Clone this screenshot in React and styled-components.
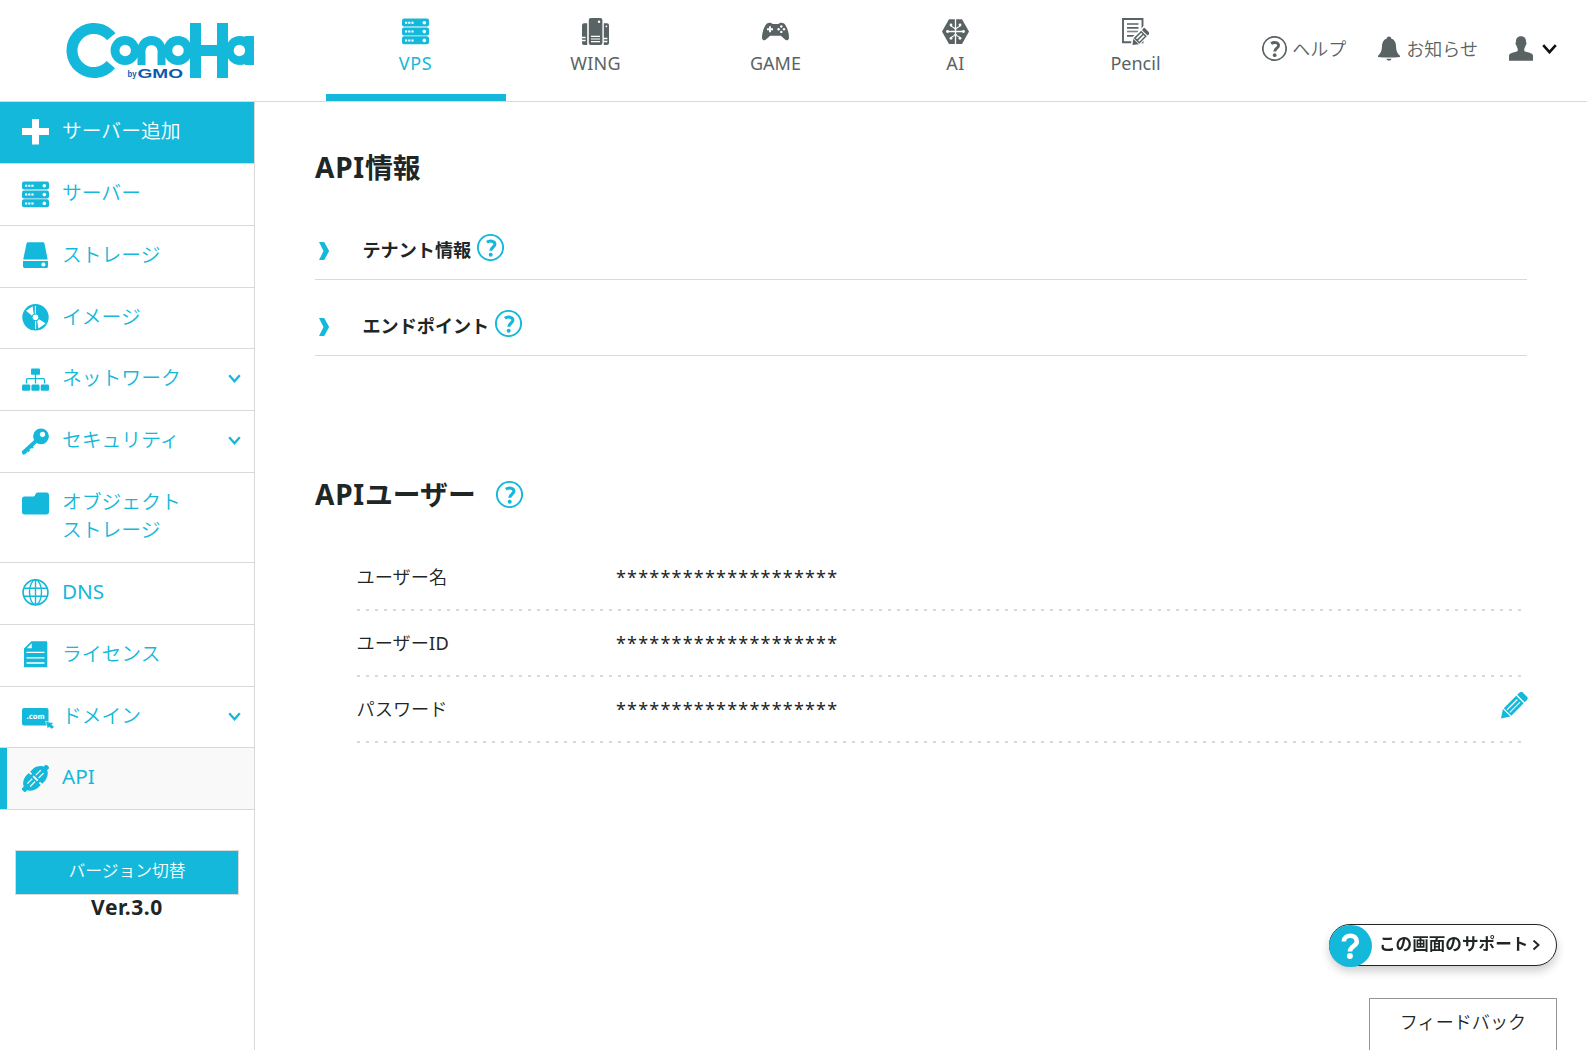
import React from 'react';
import styled, { createGlobalStyle, css } from 'styled-components';

const cyan = '#14b8da';
const ink = '#202526';
const gray = '#5a6363';
const line = '#d9d9d9';

const GlobalStyle = createGlobalStyle`
  *, *::before, *::after { box-sizing: border-box; }
  html, body { margin: 0; padding: 0; height: 100%; overflow: hidden; }
  body {
    background: #fff;
    color: ${ink};
    font-family: "Noto Sans", "Noto Sans CJK JP", sans-serif;
    font-size: 18px;
    font-weight: 350;
  }
  h1, h2, p { margin: 0; }
  button { font-weight: inherit; }
  svg { display: block; flex: none; }
`;

const Page = styled.div`
  display: flex;
  flex-direction: column;
  height: 100vh;
`;

const Header = styled.header`
  display: flex;
  flex: none;
  height: 102px;
  border-bottom: 1px solid ${line};
`;

const LogoLink = styled.a`
  width: 254px;
  padding: 22px 0 0 66px;
`;

const Nav = styled.nav`
  display: flex;
  margin-left: 72px;
`;

const NavItem = styled.a`
  display: flex;
  flex-direction: column;
  align-items: center;
  width: 180px;
  height: 101px;
  padding: 18px 1px 0 0;
  color: ${(p) => (p.$active ? cyan : gray)};
  border-bottom: 7px solid ${(p) => (p.$active ? cyan : 'transparent')};
`;

const NavLabel = styled.span`
  margin-top: 5px;
  font-size: 18px;
  font-weight: 400;
  line-height: 26px;
  letter-spacing: ${(p) => p.$spacing || 0}px;
`;

const HeaderTools = styled.div`
  display: flex;
  align-items: center;
  height: 97px;
  margin-left: auto;
  padding-right: 30px;
  color: ${gray};
`;

const Tool = styled.a`
  display: flex;
  align-items: center;
  gap: ${(p) => p.$gap}px;
  margin-left: ${(p) => p.$before || 0}px;
`;

const ToolLabel = styled.span`
  margin-bottom: 2px;
`;

const Body = styled.div`
  display: flex;
  flex: 1;
  min-height: 0;
`;

const Sidebar = styled.aside`
  width: 255px;
  flex: none;
  border-right: 1px solid ${line};
`;

const SideItem = styled.a`
  display: flex;
  align-items: flex-start;
  height: ${(p) => p.$height}px;
  padding: 15px 13px 0 22px;
  border-bottom: 1px solid ${line};
  color: ${cyan};
  ${(p) => p.$primary && css`
    background: ${cyan};
    color: #fff;
  `}
  ${(p) => p.$current && css`
    background: linear-gradient(90deg, ${cyan} 7px, #f9f9f9 7px);
  `}
`;

const SideIcon = styled.span`
  width: 40px;
  height: 29px;
  margin-top: ${(p) => (p.$lowered ? 1 : 0)}px;
  display: flex;
  align-items: center;
  flex: none;
`;

const SideLabel = styled.span`
  flex: 1;
  font-size: ${(p) => (p.$latin ? 20.7 : 19.8)}px;
  font-weight: ${(p) => (p.$latin ? 400 : 350)};
  line-height: 27.5px;
  white-space: pre-line;
`;

const SideChevron = styled.span`
  padding-top: 10px;
`;

const VersionBox = styled.div`
  display: flex;
  flex-direction: column;
  padding: 40px 15px 0;
  text-align: center;
`;

const VersionButton = styled.button`
  height: 45px;
  padding: 0 0 6px;
  border: 1px solid ${line};
  background: ${cyan};
  color: #fff;
  font-family: inherit;
  font-size: 16.8px;
`;

const VersionText = styled.strong`
  font-size: 21px;
  font-weight: 700;
  line-height: 24px;
  letter-spacing: 0.6px;
`;

const Main = styled.main`
  flex: 1;
  padding: 46px 60px 0;
`;

const Title = styled.h1`
  height: 40px;
  font-size: 27.8px;
  font-weight: 700;
  line-height: 38px;
`;

const SubTitle = styled.h2`
  display: flex;
  align-items: center;
  height: 40px;
  margin-top: 118px;
  font-size: 27.8px;
  font-weight: 700;
  line-height: 40px;
`;

const SubTitleText = styled.span`
  margin-bottom: 1px;
`;

const Latin = styled.span`
  font-size: 28px;
  letter-spacing: 0.8px;
`;

const HelpSlot = styled.span`
  margin-left: ${(p) => p.$before}px;
  color: ${cyan};
`;

const Accordions = styled.section`
  margin-top: 16px;
`;

const Accordion = styled.div`
  display: flex;
  align-items: flex-start;
  height: 76px;
  padding: 30px 0 0 4px;
  border-bottom: 1px solid ${line};
  font-size: 18.1px;
  font-weight: 700;
  line-height: 32px;
`;

const Arrow = styled.span`
  width: 43.5px;
  padding-top: 8px;
`;

const Fields = styled.section`
  margin: 31px 0 0 42px;
`;

const Field = styled.div`
  display: flex;
  align-items: flex-start;
  height: 66px;
  padding-top: 16px;
  line-height: 32px;
  background: repeating-linear-gradient(90deg, ${line} 0 3px, transparent 3px 9px)
    left bottom / 1170px 2px no-repeat;
`;

const FieldName = styled.span`
  width: 259.5px;
  margin-left: -0.5px;
  font-size: 18.2px;
`;

const FieldLatin = styled.span`
  font-weight: 400;
  letter-spacing: 0.5px;
`;

const FieldValue = styled.span`
  flex: 1;
  font-weight: 400;
  letter-spacing: 1.2px;
`;

const EditButton = styled.span`
  margin: -1px -1px 0 0;
`;

const Support = styled.a`
  position: fixed;
  right: 30px;
  top: 924px;
  display: flex;
  align-items: center;
  width: 228px;
  height: 42px;
  border: 1px solid ${ink};
  border-radius: 21px;
  background: #fff;
  box-shadow: 0 5px 10px rgba(0, 0, 0, 0.2);
  font-size: 16.6px;
  font-weight: 700;
`;

const SupportMark = styled.span`
  width: 43px;
  height: 42px;
  margin: 1px 7px 0 -1px;
  border-radius: 21px;
  background: ${cyan};
`;

const SupportText = styled.span`
  margin: 0 4px 5px 0;
  white-space: nowrap;
`;

const Feedback = styled.button`
  position: fixed;
  right: 30px;
  top: 998px;
  width: 188px;
  height: 60px;
  padding: 0 0 14px;
  border: 1px solid #959595;
  background: #fff;
  color: ${ink};
  font-family: inherit;
  font-size: 18.1px;
`;

const Logo = () => (
  <svg width="188" height="58" viewBox="66 22 188 58" role="img" aria-label="ConoHa by GMO">
    <circle cx="94" cy="50.5" r="22" fill="none" stroke={cyan} strokeWidth="11"
      strokeDasharray="107.5 31" transform="rotate(40 94 50.5)" />
    <circle cx="125" cy="50.5" r="15.8" fill="#fff" />
    <g fill={cyan}>
      <circle cx="125" cy="50.5" r="14.4" />
      <circle cx="151.5" cy="50" r="14" />
      <rect x="137.5" y="50" width="28" height="15" />
      <circle cx="178" cy="50.5" r="14.4" />
      <rect x="190" y="23" width="11" height="55" />
      <rect x="217" y="23" width="11" height="55" />
      <rect x="188" y="45" width="42" height="11" />
      <circle cx="240" cy="50.5" r="14.4" />
      <rect x="245" y="36" width="9" height="29" />
    </g>
    <g fill="#fff">
      <circle cx="125.2" cy="50.5" r="5.7" />
      <circle cx="151.5" cy="51" r="6" />
      <rect x="145.5" y="51" width="12" height="15" />
      <circle cx="178" cy="50.5" r="5.7" />
      <circle cx="239.4" cy="50.5" r="5.7" />
    </g>
    <text x="127.5" y="77" fontFamily="Liberation Sans, sans-serif" fontWeight="700" fontSize="9"
      textLength="9" lengthAdjust="spacingAndGlyphs" fill="#0b5cad">by</text>
    <text x="137.5" y="77.8" fontFamily="Liberation Sans, sans-serif" fontWeight="700" fontSize="13"
      textLength="45.5" lengthAdjust="spacingAndGlyphs" fill="#0b5cad">GMO</text>
  </svg>
);

const ServerIcon = () => (
  <svg width="27" height="27" viewBox="0 0 27 27">
    {[0.6, 9.4, 18.2].map((y) => (
      <g key={y}>
        <rect x="0" y={y} width="27" height="8" rx="2" fill="currentColor" />
        <path d={`M3 ${y + 4.2}h2.2M6.2 ${y + 4.2}h2.2M9.4 ${y + 4.2}h2.2`} stroke="#fff" strokeWidth="2" />
        <circle cx="22.3" cy={y + 4.2} r="1.8" fill="#fff" />
      </g>
    ))}
  </svg>
);

const WingIcon = () => (
  <svg width="27" height="27" viewBox="0 0 27 27" fill="currentColor">
    <path d="M5.2 5.3H2a2 2 0 0 0-2 2v11.500h3.600v1.500H0v1.500h3.600v1.500H0V25a2 2 0 0 0 2 2h3.200z" />
    <path d="M21.800 5.300H25a2 2 0 0 1 2 2v18a2 2 0 0 1-2 1.700h-3.200v-2.700h3.600v-1.500h-3.600v-1.500h3.600v-1.500h-3.600z" />
    <rect x="6.800" y="0" width="13.600" height="27" rx="2" />
    <circle cx="17" cy="3.800" r="1.200" fill="#fff" />
    <circle cx="24.400" cy="8.300" r=".9" fill="#fff" />
    <path d="M9 18.400h9M9 21h9M9 23.600h9" stroke="#fff" strokeWidth="1.100" />
  </svg>
);

const GameIcon = () => (
  <svg width="27" height="27" viewBox="0 0 27 27">
    <path fill="currentColor" d="M5 5.500c2-1.100 4.300-.8 5.500.5h6c1.200-1.300 3.500-1.600 5.500-.5C24.800 8 27 14.500 27 19.500c0 3-2.500 3.700-4.300 1.700l-3.800-3.500H8.100l-3.800 3.500C2.500 23.200 0 22.500 0 19.500 0 14.500 2.200 8 5 5.500z" />
    <path d="M5 11.200h6M8 8.200v6" stroke="#fff" strokeWidth="1.900" />
    <g fill="#fff">
      <circle cx="19.300" cy="8.500" r="1.200" /><circle cx="19.300" cy="13.900" r="1.200" />
      <circle cx="16.600" cy="11.200" r="1.200" /><circle cx="22" cy="11.200" r="1.200" />
    </g>
  </svg>
);

const AiIcon = () => (
  <svg width="27" height="27" viewBox="0 0 27 27">
    <path fill="currentColor" d="M7 1.200h13L27 13.500 20 26H7L0 13.500z" />
    <g stroke="#fff" strokeWidth="1.100" fill="none">
      <path d="M13.500 1v25M5.500 13.500h16" strokeWidth="1.300" />
      <path d="M9 7.500c.2 2.300 3.600.5 3.600 3.800M18 7.500c-.2 2.300-3.600.5-3.600 3.800M9 20c.2-2.300 3.600-.5 3.600-3.800M18 20c-.2-2.300-3.600-.5-3.600-3.800" />
    </g>
    <g fill="#fff">
      <circle cx="9" cy="7" r="1.400" /><circle cx="18" cy="7" r="1.400" />
      <circle cx="9" cy="20.300" r="1.400" /><circle cx="18" cy="20.300" r="1.400" />
      <circle cx="5.500" cy="13.500" r="1.400" /><circle cx="21.500" cy="13.500" r="1.400" />
    </g>
  </svg>
);

const PencilNoteIcon = () => (
  <svg width="27" height="27" viewBox="0 0 27 27">
    <path d="M1 1h19.500v23.300H1z" fill="none" stroke="currentColor" strokeWidth="1.900" />
    <path d="M5 6h11.500M5 9.800h11.500M5 17.800h7.500" stroke="currentColor" strokeWidth="1.700" />
    <path d="M5 13.500h11" stroke="#8b7f92" strokeWidth="1.700" />
    <g transform="translate(10.500 27) rotate(-45)">
      <path d="M-1-1.500L5-5.500h17v10.500H5z" fill="#fff" />
      <path d="M0 0l5-4v8z" fill="currentColor" />
      <path d="M6.500-3.200h9v6.400h-9zM6.500 0h9" fill="none" stroke="currentColor" strokeWidth="1.500" />
      <rect x="17.300" y="-4" width="3.300" height="8" rx=".7" fill="currentColor" />
    </g>
  </svg>
);

const HelpIcon = ({ size = 27 }) => (
  <svg width={size} height={size} viewBox="0 0 27 27">
    <circle cx="13.500" cy="13.500" r="12.600" fill="none" stroke="currentColor" strokeWidth="1.900" />
    <path d="M9.900 8.200c3-2.200 8-1.200 8 2 0 3-4.100 3.100-4.100 6.600" fill="none" stroke="currentColor" strokeWidth="3.100" />
    <circle cx="13.700" cy="20.700" r="2" fill="currentColor" />
  </svg>
);

const BellIcon = () => (
  <svg width="22" height="25" viewBox="0 0 22 25" fill="currentColor">
    <path d="M11 0.500c1.300 0 2.200.8 2.200 2 3.200 1 4.600 3.700 4.800 7 .2 4.800.7 7.200 4 10.300v1.200c-6 .8-16 .8-22 0v-1.200c3.300-3.100 3.800-5.500 4-10.300.2-3.300 1.600-6 4.800-7 0-1.200.9-2 2.200-2z" />
    <path d="M8.500 22.700h5c-.3 2.500-4.700 2.500-5 0z" />
  </svg>
);

const UserIcon = () => (
  <svg width="24" height="25" viewBox="0 0 24 25" fill="currentColor">
    <path d="M12 0.300c3.600 0 5 2.500 5 5.200 0 1 .6 1.200.5 2.200-.1 1-.8 1-1 2-.3 1.500-1 2.200-1.200 3v2.300c2.200 1.500 8.700 1.500 8.700 4.700v5H0v-5c0-3.200 6.500-3.200 8.700-4.700v-2.300c-.2-.8-.9-1.500-1.200-3-.2-1-.9-1-1-2-.1-1 .5-1.200.5-2.200C7 2.800 8.400.3 12 .3z" />
  </svg>
);

const ChevronDown = ({ width, height, stroke, weight }) => (
  <svg width={width} height={height} viewBox={`0 0 ${width} ${height}`} fill="none">
    <path d={`M1.200 1.200L${width / 2} ${height - 1.8}L${width - 1.2} 1.200`} stroke={stroke} strokeWidth={weight} />
  </svg>
);

const PlusIcon = () => (
  <svg width="27" height="27" viewBox="0 0 27 27" fill="currentColor">
    <path d="M10 1h7v9h10v7H17v9.500h-7V17H0v-7h10z" />
  </svg>
);

const StorageIcon = () => (
  <svg width="27" height="27" viewBox="0 0 27 27" fill="currentColor">
    <path d="M5.800.3h15.400c.6 0 1 .4 1.200 1l3.300 16.200H1.200L4.600 1.300c.2-.6.600-1 1.200-1z" />
    <path d="M1 19h25v5.200c0 1-.6 1.800-1.600 1.800H2.600c-1 0-1.600-.8-1.600-1.800z" />
    <circle cx="21.400" cy="22.400" r="2" fill="#fff" />
  </svg>
);

const DiscIcon = () => (
  <svg width="27" height="27" viewBox="0 0 27 27">
    <circle cx="13.500" cy="13.300" r="13.200" fill="currentColor" />
    <path d="M11.800 10.300L10.600 2.300 4 6.800l6.300 5.200zM15.200 16.500l1.200 8 7.300-5-7-4.400z" fill="#fff" />
    <path d="M13.400 10V2M13.600 17v8" stroke="#fff" strokeWidth="1.100" />
    <circle cx="13.500" cy="13.300" r="3.800" fill="currentColor" />
    <circle cx="13.500" cy="13.300" r="2.800" fill="#fff" />
  </svg>
);

const NetworkIcon = () => (
  <svg width="27" height="23" viewBox="0 0 27 23">
    <g fill="currentColor">
      <rect x="9" y="0.500" width="9" height="6.300" rx="1" />
      <rect x="0" y="16.600" width="8.300" height="6.200" rx="1.300" />
      <rect x="9.400" y="16.600" width="8.200" height="6.200" rx="1.300" />
      <rect x="18.700" y="16.600" width="8.300" height="6.200" rx="1.300" />
    </g>
    <path d="M13.500 6v9.500M4.500 15.500v-3.700c0-.7.500-1.200 1.200-1.200h15.600c.7 0 1.200.5 1.200 1.200v3.700" fill="none" stroke="currentColor" strokeWidth="1.300" />
  </svg>
);

const KeyIcon = () => (
  <svg width="27" height="27" viewBox="0 0 27 27">
    <circle cx="19" cy="8.300" r="7.900" fill="currentColor" />
    <path d="M14 13L2 24" stroke="currentColor" strokeWidth="3.800" />
    <path d="M5 21l2.200 2.400M8.700 17.500l2.200 2.500" stroke="currentColor" strokeWidth="2.200" />
    <path d="M0 23l3.500-1.500 1.300 3-2.300 1.900H.8L0 25z" fill="currentColor" />
    <circle cx="20.500" cy="6.300" r="2.600" fill="#fff" />
  </svg>
);

const FolderIcon = () => (
  <svg width="27" height="23" viewBox="0 0 27 23" fill="currentColor">
    <path d="M2.500 4.500h9.300c1.700 0 1.200-4 3.700-4h9c1.600 0 2.500.9 2.500 2.500v17c0 1.600-.9 2.500-2.500 2.500h-22C.9 22.500 0 21.600 0 20V7c0-1.600.9-2.500 2.500-2.500z" />
  </svg>
);

const GlobeIcon = () => (
  <svg width="27" height="27" viewBox="0 0 27 27" fill="none" stroke="currentColor">
    <circle cx="13.500" cy="13.300" r="12.400" strokeWidth="1.700" />
    <ellipse cx="13.500" cy="13.300" rx="6" ry="12.400" strokeWidth="1.400" />
    <path d="M13.500 1v25M2 9.300h23M2 17.300h23" strokeWidth="1.400" />
  </svg>
);

const LicenseIcon = () => (
  <svg width="27" height="27" viewBox="0 0 27 27">
    <path d="M9.300 0.300H24c.8 0 1.300.5 1.300 1.300v24.700H2V7.600z" fill="currentColor" />
    <path d="M9.700 2.300v5H4.800z" fill="#fff" />
    <path d="M4.500 11.300h18M4.500 16.800h18M4.500 22h18" stroke="#fff" strokeWidth="1.300" />
  </svg>
);

const DomainIcon = () => (
  <svg width="33" height="25" viewBox="0 -4 33 25">
    <rect x="0" y="0" width="26.500" height="17.500" rx="2" fill="currentColor" />
    <text x="13.400" y="11" textAnchor="middle" fontSize="7.500" fontWeight="700"
      fontFamily="DejaVu Sans, sans-serif" textLength="18.500" lengthAdjust="spacingAndGlyphs" fill="#fff">.com</text>
    <path d="M23.500 13.200l8 1.900-1.700 1.700 2.700 2.200-2.800 2-2.500-2-1.700 1.700z" fill="currentColor" stroke="#fff" strokeWidth=".6" />
  </svg>
);

const PlugIcon = () => (
  <svg width="27" height="27" viewBox="0 0 27 27">
    <g transform="rotate(-45 13.300 13.500)">
      <g fill="currentColor">
        <path d="M12.500 5H9C5 5-.5 8.500-.5 11.500v4C-.5 18.500 5 22 9 22h3.500z" />
        <path d="M14.500 5H18c4 0 9.500 3.500 9.500 6.500v4c0 3-5.500 6.500-9.500 6.500h-3.500z" />
        <rect x="-4" y="11" width="5" height="5" rx="1" />
        <rect x="26" y="11" width="5" height="5" rx="1" />
      </g>
      <path d="M4 11.500h7M4 15.500h7M16 11.500h7M16 15.500h7" stroke="#fff" strokeWidth="1.200" />
      <path d="M11.500 9h4M11.500 18h4" stroke="currentColor" strokeWidth="2.500" />
    </g>
  </svg>
);

const ArrowRight = () => (
  <svg width="10" height="18" viewBox="0 0 10 18" fill={cyan}>
    <path d="M0 0h5.200L10.200 9l-5 9H0l4.500-9z" />
  </svg>
);

const EditIcon = () => (
  <svg width="27" height="27" viewBox="0 0 27 27" fill={cyan}>
    <g transform="translate(0 26.500) rotate(-45)">
      <path d="M0 0l8-5.300V5.300z" />
      <path d="M9.300-5.300h17.500V5.300H9.300z" />
      <path d="M30.800-5.300h-2.600V5.300h2.600c2 0 3-.8 3-2.300v-6c0-1.500-1-2.300-3-2.300z" />
      <path d="M10.500-1.900h14.500M10.500 1.900h14.500" stroke="#fff" strokeWidth="1.200" />
    </g>
  </svg>
);

const QuestionMark = () => (
  <svg width="42" height="42" viewBox="0 0 42 42">
    <path d="M14.800 16.500c.3-8 13.200-7.500 13 .3-.2 4.500-6.700 4.300-6.900 9.700" fill="none" stroke="#fff" strokeWidth="4.600" />
    <circle cx="20.900" cy="31" r="3" fill="#fff" />
  </svg>
);

const services = [
  { label: 'VPS', icon: <ServerIcon />, spacing: 0.6, active: true },
  { label: 'WING', icon: <WingIcon />, spacing: 0.2 },
  { label: 'GAME', icon: <GameIcon />, spacing: 0 },
  { label: 'AI', icon: <AiIcon />, spacing: 0.5 },
  { label: 'Pencil', icon: <PencilNoteIcon />, spacing: 0 },
];

const menu = [
  { label: 'サーバー追加', icon: <PlusIcon />, height: 62, primary: true },
  { label: 'サーバー', icon: <ServerIcon />, height: 62, lowered: true },
  { label: 'ストレージ', icon: <StorageIcon />, height: 62 },
  { label: 'イメージ', icon: <DiscIcon />, height: 61 },
  { label: 'ネットワーク', icon: <NetworkIcon />, height: 62, lowered: true, expandable: true },
  { label: 'セキュリティ', icon: <KeyIcon />, height: 62, lowered: true, expandable: true },
  { label: 'オブジェクト\nストレージ', icon: <FolderIcon />, height: 90, lowered: true },
  { label: 'DNS', icon: <GlobeIcon />, height: 62, latin: true },
  { label: 'ライセンス', icon: <LicenseIcon />, height: 62 },
  { label: 'ドメイン', icon: <DomainIcon />, height: 61, expandable: true },
  { label: 'API', icon: <PlugIcon />, height: 62, lowered: true, latin: true, current: true },
];

const fields = [
  { name: 'ユーザー名', value: '********************' },
  { name: 'ユーザー', suffix: 'ID', value: '********************' },
  { name: 'パスワード', value: '********************', editable: true },
];

export default function App() {
  return (
    <>
      <GlobalStyle />
      <Page>
        <Header>
          <LogoLink><Logo /></LogoLink>
          <Nav>
            {services.map((s) => (
              <NavItem key={s.label} $active={s.active}>
                {s.icon}
                <NavLabel $spacing={s.spacing}>{s.label}</NavLabel>
              </NavItem>
            ))}
          </Nav>
          <HeaderTools>
            <Tool $gap={5}><HelpIcon size={25} /><ToolLabel>ヘルプ</ToolLabel></Tool>
            <Tool $gap={6} $before={32}><BellIcon /><ToolLabel>お知らせ</ToolLabel></Tool>
            <Tool $gap={9} $before={31}>
              <UserIcon />
              <ChevronDown width={15} height={10} stroke="#111" weight={2.6} />
            </Tool>
          </HeaderTools>
        </Header>
        <Body>
          <Sidebar>
            {menu.map((m) => (
              <SideItem key={m.label} $height={m.height} $primary={m.primary} $current={m.current}>
                <SideIcon $lowered={m.lowered}>{m.icon}</SideIcon>
                <SideLabel $latin={m.latin}>{m.label}</SideLabel>
                {m.expandable && (
                  <SideChevron><ChevronDown width={13} height={9} stroke={cyan} weight={2.3} /></SideChevron>
                )}
              </SideItem>
            ))}
            <VersionBox>
              <VersionButton>バージョン切替</VersionButton>
              <VersionText>Ver.3.0</VersionText>
            </VersionBox>
          </Sidebar>
          <Main>
            <Title><Latin>API</Latin>情報</Title>
            <Accordions>
              {['テナント情報', 'エンドポイント'].map((label) => (
                <Accordion key={label}>
                  <Arrow><ArrowRight /></Arrow>
                  {label}
                  <HelpSlot $before={6}><HelpIcon /></HelpSlot>
                </Accordion>
              ))}
            </Accordions>
            <SubTitle>
              <SubTitleText><Latin>API</Latin>ユーザー</SubTitleText>
              <HelpSlot $before={20}><HelpIcon /></HelpSlot>
            </SubTitle>
            <Fields>
              {fields.map((f) => (
                <Field key={f.name}>
                  <FieldName>{f.name}{f.suffix && <FieldLatin>{f.suffix}</FieldLatin>}</FieldName>
                  <FieldValue>{f.value}</FieldValue>
                  {f.editable && <EditButton><EditIcon /></EditButton>}
                </Field>
              ))}
            </Fields>
          </Main>
        </Body>
        <Support>
          <SupportMark><QuestionMark /></SupportMark>
          <SupportText>この画面のサポート</SupportText>
          <svg width="8" height="11" viewBox="0 0 8 11" fill="none">
            <path d="M1.500 0.500l5 4.500-5 4.500" stroke={ink} strokeWidth="1.900" />
          </svg>
        </Support>
        <Feedback>フィードバック</Feedback>
      </Page>
    </>
  );
}
